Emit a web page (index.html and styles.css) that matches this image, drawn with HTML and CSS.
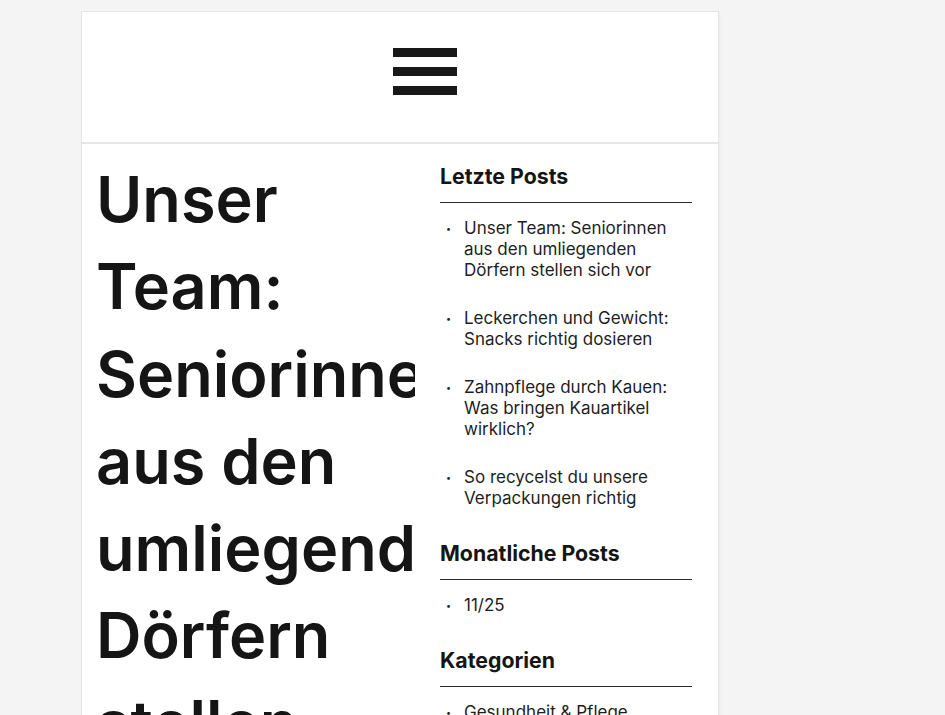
FILE: index.html
```html
<!DOCTYPE html>
<html lang="de">
<head>
    <meta charset="UTF-8">
    <meta name="viewport" content="width=device-width, initial-scale=1.0">
    <title>Unser Team: Seniorinnen aus den umliegenden Dörfern stellen sich vor</title>
    <link rel="stylesheet" href="styles.css">
</head>
<body>

<div class="page">
    <header class="site-header">
        <button class="menu-toggle" aria-label="Menü">
            <svg width="64" height="48" viewBox="0 0 64 48">
                <rect x="0" y="0" width="64" height="9" />
                <rect x="0" y="19" width="64" height="9" />
                <rect x="0" y="38" width="64" height="9" />
            </svg>
        </button>
    </header>

    <div class="content">
        <main class="post">
            <h1 class="post-title">Unser Team: Seniorinnen aus den umliegenden Dörfern stellen sich vor</h1>
        </main>

        <aside class="sidebar">
            <section class="widget">
                <h2>Letzte Posts</h2>
                <ul>
                    <li>Unser Team: Seniorinnen aus den umliegenden Dörfern stellen sich vor</li>
                    <li>Leckerchen und Gewicht: Snacks richtig dosieren</li>
                    <li>Zahnpflege durch Kauen: Was bringen Kauartikel wirklich?</li>
                    <li>So recycelst du unsere Verpackungen richtig</li>
                </ul>
            </section>
            <section class="widget">
                <h2>Monatliche Posts</h2>
                <ul>
                    <li>11/25</li>
                </ul>
            </section>
            <section class="widget">
                <h2>Kategorien</h2>
                <ul>
                    <li>Gesundheit &amp; Pflege</li>
                    <li>Ernährung</li>
                </ul>
            </section>
        </aside>
    </div>
</div>

</body>
</html>
```

FILE: styles.css
```css
* {
  box-sizing: border-box;
}
html {
  background-color: #f4f4f4;
}
body {
  font-family: Inter, "Noto Sans", sans-serif;
  color: #151515;
  margin: 11px 0 0 81px;
}
.page {
  width: 638px;
  background-color: #fff;
  border: 1px solid #e4e4e4;
  box-shadow: 0 0 3px rgba(0, 0, 0, 0.05);
}
.site-header {
  height: 132px;
  display: flex;
  justify-content: center;
  align-items: center;
  padding-left: 50px;
  border-bottom: 2px solid #e6e6e6;
}
.menu-toggle {
  background: none;
  border: none;
  padding: 0;
  margin-top: -10px;
  display: flex;
}
.menu-toggle svg {
  fill: #181818;
}
.content {
  display: grid;
  grid-template-columns: 319px 252px;
  column-gap: 25px;
  padding: 0 26px 0 14px;
}
.post {
  min-width: 0;
  overflow: hidden;
}
.post-title {
  font-size: 63px;
  font-weight: 600;
  line-height: 87.3px;
  margin: 12px 0 0;
}
.sidebar {
  padding-top: 19px;
}
.widget {
  margin-bottom: 31px;
}
.widget h2 {
  font-size: 21.3px;
  font-weight: 700;
  line-height: 26px;
  margin: 0;
  padding-bottom: 13px;
  border-bottom: 1px solid #2a2a2a;
}
.widget ul {
  list-style: none;
  margin: 15px 0 0;
  padding: 0;
}
.widget li {
  display: flex;
  font-size: 17px;
  line-height: 21px;
  color: #1e1e1e;
}
.widget li::before {
  content: "\2022";
  flex: 0 0 18px;
  padding-left: 6px;
  font-size: 9px;
}
.widget li + li {
  margin-top: 27px;
}
```
